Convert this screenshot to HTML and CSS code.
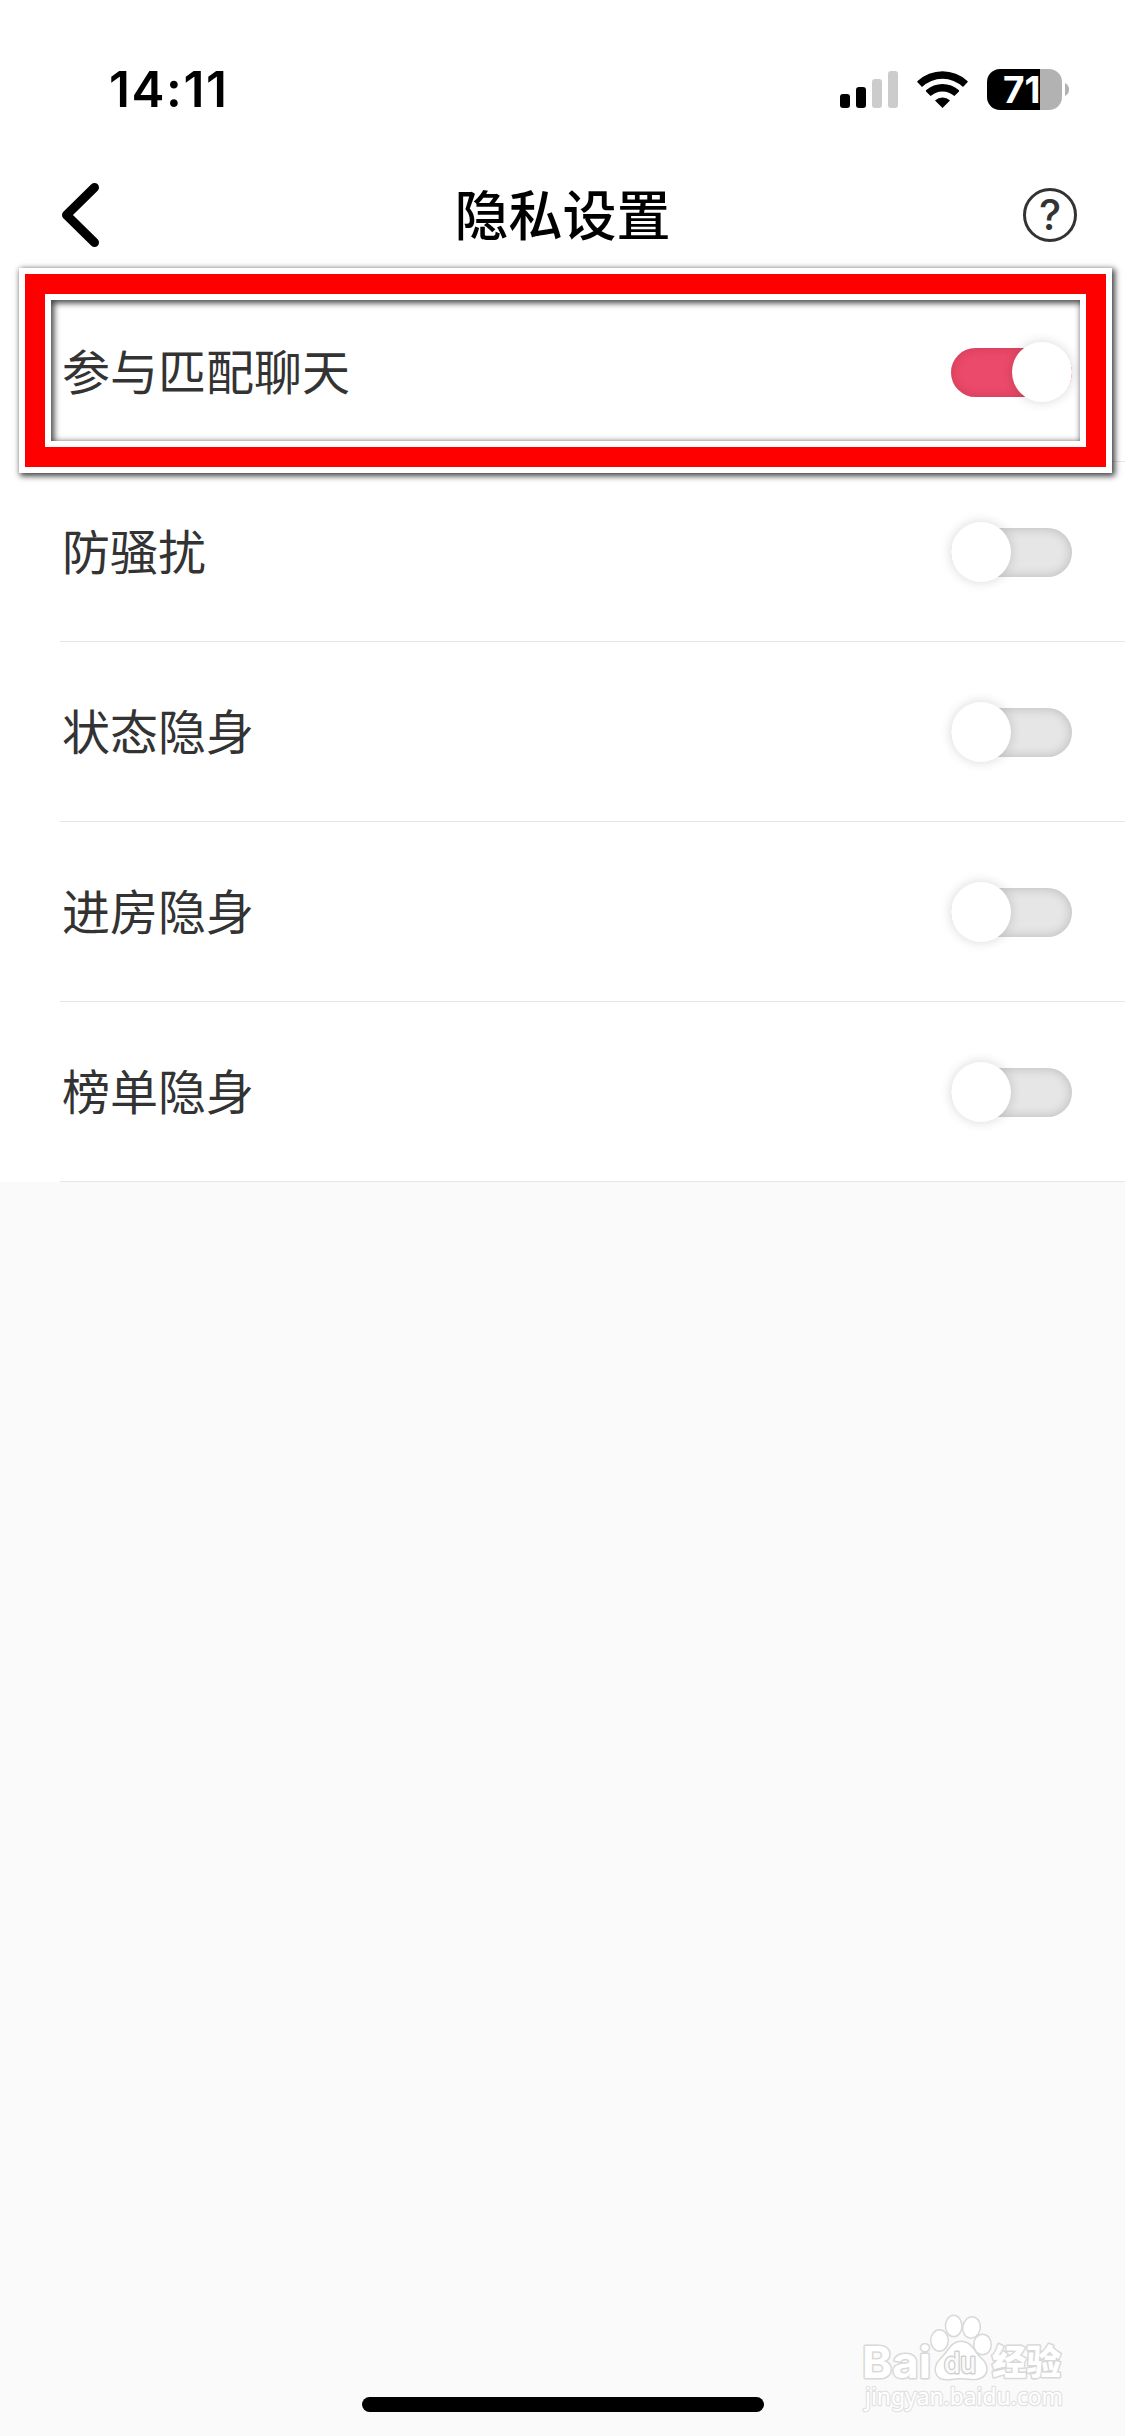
FILE: index.html
```html
<!DOCTYPE html>
<html lang="zh-CN">
<head>
<meta charset="utf-8">
<title>隐私设置</title>
<link rel="stylesheet" href="styles.css">
</head>
<body>
<div class="screen">
  <header class="status">
    <span class="time">14:11</span>
    <div class="indicators">
      <svg class="signal" width="58" height="37" viewBox="0 0 58 37">
        <rect x="0" y="23" width="10" height="14" rx="3"/>
        <rect x="16" y="16" width="10" height="21" rx="3"/>
        <rect class="weak" x="32" y="8" width="10" height="29" rx="3"/>
        <rect class="weak" x="48" y="0" width="10" height="37" rx="3"/>
      </svg>
      <svg class="wifi" width="51" height="37" viewBox="0 0 51 37">
        <path d="M25.500 37L18 29.400A11.200 11.200 0 0 1 33 29.400Z"/>
        <path d="M13.600 25.100L9 20.500Q8.500 19.700 9.300 19A24.500 24.500 0 0 1 41.700 19Q42.500 19.700 42 20.500L37.400 25.100A17.400 17.400 0 0 0 13.600 25.100Z"/>
        <path d="M5 16L.500 11.300Q0 10.700 .600 10A36.500 36.500 0 0 1 50.400 10Q51 10.700 50.500 11.300L46 16A29.800 29.800 0 0 0 5 16Z"/>
      </svg>
      <div class="battery">
        <div class="cell"><span class="level">71</span></div>
        <svg class="nub" width="4" height="13" viewBox="0 0 4 13"><path d="M0 0Q4 2 4 6.500T0 13Z"/></svg>
      </div>
    </div>
  </header>
  <nav class="navbar">
    <svg class="back" width="37" height="64" viewBox="0 0 37 64"><path d="M32.500 4.500L4.500 32L32.500 59.500"/></svg>
    <h1 class="title">隐私设置</h1>
    <span class="help">?</span>
  </nav>
  <main class="list">
    <div class="row"><span class="label">参与匹配聊天</span><div class="switch on"><i class="knob"></i></div></div>
    <div class="row"><span class="label">防骚扰</span><div class="switch"><i class="knob"></i></div></div>
    <div class="row"><span class="label">状态隐身</span><div class="switch"><i class="knob"></i></div></div>
    <div class="row"><span class="label">进房隐身</span><div class="switch"><i class="knob"></i></div></div>
    <div class="row"><span class="label">榜单隐身</span><div class="switch"><i class="knob"></i></div></div>
    <div class="highlight"><div class="highlight-inner"></div></div>
  </main>
  <footer class="home"><div class="home-bar"></div></footer>
  <svg class="watermark" width="210" height="106" viewBox="0 0 210 106">
    <g class="mark">
      <text class="brand" x="0" y="63" textLength="69" lengthAdjust="spacingAndGlyphs">Bai</text>
      <ellipse cx="77.500" cy="25.500" rx="8" ry="10"/>
      <ellipse cx="91.700" cy="11" rx="7.500" ry="10"/>
      <ellipse cx="109.500" cy="12.500" rx="8" ry="10" transform="rotate(10 109.500 12.500)"/>
      <ellipse cx="120.500" cy="29.500" rx="8" ry="9.500"/>
      <path d="M99 27C89 27 87 37 79 44C70 53 74 64 84 64C92 64 92 63 99 63C107 63 111 65 117 63C127 60 126 49 118 43C111 36 109 27 99 27Z"/>
      <text class="du" x="82" y="58" textLength="32" lengthAdjust="spacingAndGlyphs">du</text>
      <text class="cn" x="130" y="60" textLength="69" lengthAdjust="spacingAndGlyphs">经验</text>
      <text class="url" x="3" y="90" textLength="198" lengthAdjust="spacingAndGlyphs">jingyan.baidu.com</text>
    </g>
  </svg>
</div>
</body>
</html>
```
FILE: styles.css
```css
* { box-sizing: border-box; }
body {
  margin: 0;
  font-family: Inter, "Noto Sans CJK SC", sans-serif;
}
.screen {
  position: relative;
  display: flex;
  flex-direction: column;
  width: 1125px;
  height: 2436px;
  background: #fafafa;
  overflow: hidden;
}
.status {
  display: flex;
  justify-content: space-between;
  align-items: center;
  height: 148px;
  padding: 30px 56px 0 109px;
  background: #fff;
}
.time {
  font-size: 49.5px;
  font-weight: 600;
  line-height: 60px;
  letter-spacing: 1.6px;
}
.indicators { display: flex; align-items: center; }
.signal .weak { fill: #ccc; }
.wifi { margin: 0 19px; }
.battery { display: flex; align-items: center; gap: 3px; }
.cell {
  display: flex;
  align-items: center;
  width: 75px;
  height: 41px;
  padding-left: 16px;
  border-radius: 13px;
  background: linear-gradient(90deg, #000 53px, #b2b2b2 53px);
}
.level {
  color: #fff;
  font-size: 37px;
  font-weight: 700;
  line-height: 41px;
}
.nub { fill: #b2b2b2; }
.navbar {
  display: flex;
  justify-content: space-between;
  align-items: center;
  height: 134px;
  padding: 0 48px 0 62px;
  background: #fff;
}
.back { width: 52px; padding-right: 15px; }
.back path {
  fill: none;
  stroke: #000;
  stroke-width: 9;
  stroke-linecap: round;
  stroke-linejoin: round;
}
.title {
  margin: 0;
  padding: 0 12px 4px 0;
  font-family: "Noto Sans CJK SC", sans-serif;
  font-size: 54px;
  font-weight: 500;
  line-height: 80px;
}
.help {
  display: flex;
  justify-content: center;
  align-items: center;
  width: 54px;
  height: 54px;
  border: 3px solid #333;
  border-radius: 50%;
  color: #333;
  font-size: 42px;
  font-weight: 500;
  line-height: 48px;
}
.list {
  position: relative;
  padding-left: 60px;
  background: #fff;
}
.row {
  display: flex;
  justify-content: space-between;
  align-items: center;
  height: 180px;
  padding: 1px 53px 0 2px;
  border-bottom: 1px solid #e6e6e6;
  color: #333;
  font-family: "Noto Sans CJK SC", sans-serif;
  font-size: 48px;
  line-height: 70px;
}
.label { padding-bottom: 7px; }
.switch {
  display: flex;
  align-items: center;
  width: 121px;
  height: 49px;
  border-radius: 25px;
  background: #e6e6e6;
  box-shadow: inset 0 0 12px rgba(0, 0, 0, .2);
}
.switch.on {
  justify-content: flex-end;
  background: #ec4a6a;
  box-shadow: inset 0 0 12px rgba(80, 0, 20, .2);
}
.knob {
  flex: none;
  width: 60px;
  height: 60px;
  border-radius: 50%;
  background: #fff;
  box-shadow: 0 0 12px rgba(0, 0, 0, .16);
}
.highlight {
  position: absolute;
  left: 19px;
  top: -14px;
  width: 1093px;
  height: 205px;
  border: 6px solid #fff;
  box-shadow: 2px 2px 6px 1px rgba(0, 0, 0, .75);
  clip-path: path(evenodd, "M-19 -14H1106V225H-19ZM32 32V173H1061V32Z");
  background: #f00;
}
.highlight-inner {
  position: absolute;
  inset: 20px;
  border: 6px solid #fff;
}
.list::after {
  content: "";
  position: absolute;
  left: 51px;
  top: 18px;
  width: 1029px;
  height: 141px;
  box-shadow: inset 2px 2px 6px 1px rgba(0, 0, 0, .75);
}
.home {
  display: flex;
  justify-content: center;
  align-items: flex-end;
  flex: 1;
  padding-bottom: 24px;
}
.home-bar {
  width: 402px;
  height: 15px;
  border-radius: 8px;
  background: #000;
}
.watermark {
  position: absolute;
  left: 862px;
  top: 2315px;
  overflow: visible;
}
.mark {
  fill: #fff;
  stroke: #d8d8d8;
  stroke-width: 3px;
  stroke-linejoin: round;
  paint-order: stroke;
}
.brand { font: 700 44px Inter, sans-serif; }
.du { font: 500 29px Inter, sans-serif; fill: #fafafa; stroke: #d0d0d0; }
.cn { font: 900 35px "Noto Sans CJK SC", sans-serif; }
.url { font: 400 24px "Noto Sans", sans-serif; stroke: #e2e2e2; stroke-width: 2.5px; }
```
